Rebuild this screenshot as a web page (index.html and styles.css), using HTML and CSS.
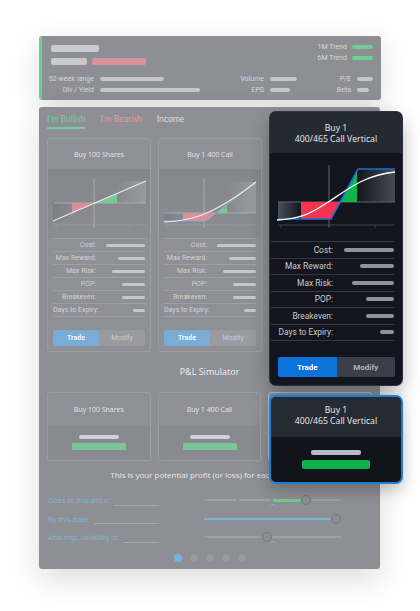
FILE: index.html
```html
<!DOCTYPE html>
<html lang="en">
<head>
  <meta charset="UTF-8">
  <meta name="viewport" content="width=device-width, initial-scale=1.0">
  <title>Strategy Builder</title>
  <link rel="stylesheet" href="styles.css">
</head>
<body>
  <div class="stage">
    <div class="quote">
      <div class="quote-top">
        <div class="name">
          <span class="ph ph-name"></span>
          <div class="name-row">
            <span class="ph ph-sym"></span>
            <span class="ph ph-chg"></span>
          </div>
        </div>
        <div class="trends">
          <div class="trend">1M Trend<i></i></div>
          <div class="trend">6M Trend<i></i></div>
        </div>
      </div>
      <div class="stats">
        <span class="k">52-week range</span><span class="v"><i style="width:64px"></i></span>
        <span class="k">Volume</span><span class="v"><i style="width:27px"></i></span>
        <span class="k">P/E</span><span class="v"><i style="width:16px"></i></span>
        <span class="k">Div / Yield</span><span class="v"><i style="width:100px"></i></span>
        <span class="k">EPS</span><span class="v"><i style="width:20px"></i></span>
        <span class="k">Beta</span><span class="v"><i style="width:12px"></i></span>
      </div>
    </div>

    <div class="panel">
      <nav class="tabs">
        <span class="tab bull active">I'm Bullish</span>
        <span class="tab bear">I'm Bearish</span>
        <span class="tab">Income</span>
      </nav>

      <div class="cards">
        <div class="card">
          <div class="card-head">Buy 100 Shares</div>
          <svg class="chart" viewBox="0 0 102 69">
            <defs>
              <linearGradient id="s1l" x1="0" x2="1"><stop offset="0" stop-color="#7c7d82"/><stop offset="1" stop-color="#7c7d82" stop-opacity="0"/></linearGradient>
              <linearGradient id="s1r" x1="1" x2="0"><stop offset="0" stop-color="#9a9b9f"/><stop offset="1" stop-color="#9a9b9f" stop-opacity="0"/></linearGradient>
            </defs>
            <rect x="5" y="34" width="19" height="18" fill="url(#s1l)"/>
            <rect x="69" y="12" width="29" height="22" fill="url(#s1r)"/>
            <path class="ax" d="M6 34H98M46 9V59"/>
            <path class="tk" d="M6 56H98M9 56v3M46 56v3M82 56v3"/>
            <polygon class="loss" points="24,34 46,34 24,43.8"/>
            <polygon class="gain" points="46,34 69,34 69,24.5"/>
            <path class="pl" d="M5 52L98 12"/>
          </svg>
          <div class="rows">
            <div class="row"><span class="k">Cost:</span><i style="width:39px"></i></div>
            <div class="row"><span class="k">Max Reward:</span><i style="width:27px"></i></div>
            <div class="row"><span class="k">Max Risk:</span><i style="width:33px"></i></div>
            <div class="row"><span class="k">POP:</span><i style="width:23px"></i></div>
            <div class="row"><span class="k">Breakeven:</span><i style="width:23px"></i></div>
            <div class="row"><span class="k">Days to Expiry:</span><i style="width:12px"></i></div>
          </div>
          <div class="btns"><span class="trade">Trade</span><span class="modify">Modify</span></div>
        </div>

        <div class="card">
          <div class="card-head">Buy 1 400 Call</div>
          <svg class="chart" viewBox="0 0 102 69">
            <defs>
              <linearGradient id="s2l" x1="0" x2="1"><stop offset="0" stop-color="#7c7d82"/><stop offset="1" stop-color="#7c7d82" stop-opacity="0"/></linearGradient>
              <linearGradient id="s2r" x1="1" x2="0"><stop offset="0" stop-color="#9a9b9f"/><stop offset="1" stop-color="#9a9b9f" stop-opacity="0"/></linearGradient>
            </defs>
            <rect x="5" y="44" width="19" height="8" fill="url(#s2l)"/>
            <rect x="68" y="13" width="29" height="31" fill="url(#s2r)"/>
            <path class="ax" d="M5 44H97M45 9V59"/>
            <path class="tk" d="M5 56H97M8 56v3M45 56v3M81 56v3"/>
            <polygon class="loss" points="24,44 57.3,44 47,52 24,52"/>
            <polygon class="gain" points="57.3,44 68,44 68,35.6"/>
            <polyline class="pay" points="5,52 47,52 97,13"/>
            <path class="pl" d="M5 53C30 52 52 48 97 13"/>
          </svg>
          <div class="rows">
            <div class="row"><span class="k">Cost:</span><i style="width:39px"></i></div>
            <div class="row"><span class="k">Max Reward:</span><i style="width:27px"></i></div>
            <div class="row"><span class="k">Max Risk:</span><i style="width:33px"></i></div>
            <div class="row"><span class="k">POP:</span><i style="width:23px"></i></div>
            <div class="row"><span class="k">Breakeven:</span><i style="width:23px"></i></div>
            <div class="row"><span class="k">Days to Expiry:</span><i style="width:12px"></i></div>
          </div>
          <div class="btns"><span class="trade">Trade</span><span class="modify">Modify</span></div>
        </div>

        <div class="card"></div>
      </div>

      <h2 class="sim-title">P&amp;L Simulator</h2>

      <div class="cards">
        <div class="scard">
          <div class="scard-head">Buy 100 Shares</div>
          <div class="scard-body"><span class="ph-val"></span><span class="ph-pl"></span></div>
        </div>
        <div class="scard">
          <div class="scard-head">Buy 1 400 Call</div>
          <div class="scard-body"><span class="ph-val"></span><span class="ph-pl"></span></div>
        </div>
        <div class="scard picked"></div>
      </div>

      <p class="sim-note">This is your potential profit (or loss) for each strategy:</p>

      <div class="sim-rows">
        <div class="sim-row">
          <div class="field">Goes to this price:<span class="line"></span></div>
          <div class="slider">
            <span class="seg" style="width:33px"></span>
            <span class="seg" style="width:32px;margin-left:2px"></span>
            <span class="seg up" style="width:28px;margin-left:2px"></span>
            <span class="knob"></span>
            <span class="seg fill"></span>
            <svg class="caret" viewBox="0 0 6 4"><path d="M0.8 3.4L3 1L5.2 3.4"/></svg>
          </div>
        </div>
        <div class="sim-row">
          <div class="field">By this date:<span class="line"></span></div>
          <div class="slider">
            <span class="seg blue fill"></span>
            <span class="knob"></span>
          </div>
        </div>
        <div class="sim-row">
          <div class="field">And imp. volatility is:<span class="line"></span></div>
          <div class="slider">
            <span class="seg" style="width:58px"></span>
            <span class="knob"></span>
            <span class="seg fill"></span>
            <svg class="caret" viewBox="0 0 6 4"><path d="M0.8 3.4L3 1L5.2 3.4"/></svg>
          </div>
        </div>
      </div>

      <div class="dots"><i class="on"></i><i></i><i></i><i></i><i></i></div>
    </div>

    <!-- highlighted strategy, lifted over the dimmed page -->
    <div class="focus">
      <div class="focus-head">Buy 1<br>400/465 Call Vertical</div>
      <svg class="focus-chart" viewBox="0 0 132 88">
        <defs>
          <linearGradient id="fl" x1="0" x2="1"><stop offset="0" stop-color="#4b4f58"/><stop offset="1" stop-color="#4b4f58" stop-opacity="0"/></linearGradient>
          <linearGradient id="fr" x1="1" x2="0"><stop offset="0" stop-color="#464a53"/><stop offset="1" stop-color="#464a53" stop-opacity="0"/></linearGradient>
        </defs>
        <rect x="8" y="49" width="23" height="17" fill="url(#fl)"/>
        <rect x="87" y="16" width="38" height="33" fill="url(#fr)"/>
        <path class="ax" d="M8 49H125M59 12V74"/>
        <path class="tk" d="M8 72H125M11 72v3M59 72v3M105 72v3"/>
        <polygon class="loss" points="31,49 70,49 61,66 31,66"/>
        <polygon class="gain" points="70,49 87,49 87,17.9"/>
        <polyline class="pay" points="8,66 61,66 88,16 125,16"/>
        <path class="pl" d="M7 67C35 66 45 57 60 48C78 36 95 22 125 19"/>
      </svg>
      <div class="rows">
        <div class="row"><span class="k">Cost:</span><i style="width:50px"></i></div>
        <div class="row"><span class="k">Max Reward:</span><i style="width:34px"></i></div>
        <div class="row"><span class="k">Max Risk:</span><i style="width:42px"></i></div>
        <div class="row"><span class="k">POP:</span><i style="width:28px"></i></div>
        <div class="row"><span class="k">Breakeven:</span><i style="width:28px"></i></div>
        <div class="row"><span class="k">Days to Expiry:</span><i style="width:14px"></i></div>
      </div>
      <div class="btns"><span class="trade">Trade</span><span class="modify">Modify</span></div>
    </div>

    <div class="focus-sim">
      <div class="focus-sim-head">Buy 1<br>400/465 Call Vertical</div>
      <div class="focus-sim-body"><span class="ph-val"></span><span class="ph-pl"></span></div>
    </div>
  </div>
</body>
</html>
```

FILE: styles.css
```css
* {
  box-sizing: border-box;
}

body {
  margin: 0;
  background: #fff;
  font-family: Roboto, "Liberation Sans", sans-serif;
  overflow: hidden;
}

.stage {
  position: relative;
  width: 420px;
  height: 611px;
  padding: 36px 0 0 39px;
}

/* quote header */
.quote {
  width: 342px;
  height: 64px;
  margin-bottom: 7px;
  padding: 9px 8px 0 9px;
  background: #8e8f94;
  border-left: 3px solid #6fcf90;
  border-radius: 3px;
  box-shadow: 0 8px 28px rgba(0, 0, 0, 0.13);
}

.quote-top {
  display: flex;
  justify-content: space-between;
  height: 21px;
}

.ph {
  display: block;
  height: 7px;
  border-radius: 2px;
  background: #c9cacd;
}

.ph-name { width: 48px; }
.ph-sym { width: 36px; }
.ph-chg { width: 54px; margin-left: 5px; background: #d8949b; }

.name-row {
  display: flex;
  margin-top: 6px;
}

.trends {
  margin-top: -3.5px;
}

.trend {
  display: flex;
  align-items: center;
  justify-content: flex-end;
  height: 11px;
  font-size: 7px;
  color: #d6d7da;
}

.trend i {
  width: 21px;
  height: 4px;
  margin-left: 5px;
  border-radius: 2px;
  background: #71cf92;
}

.stats {
  display: grid;
  grid-template-columns: 43px 125px 33px 60px 15px 16px;
  grid-auto-rows: 10.5px;
  column-gap: 6px;
  margin-top: 8px;
  font-size: 7px;
  color: #d6d7da;
}

.stats .k {
  display: flex;
  align-items: center;
  justify-content: flex-end;
  white-space: nowrap;
}

.stats .v {
  display: flex;
  align-items: center;
}

.stats .v i {
  height: 4px;
  border-radius: 2px;
  background: #c5c6ca;
}

/* dimmed main panel */
.panel {
  width: 341px;
  height: 462px;
  padding: 0 8px;
  background: #8e8f94;
  border-radius: 3px;
  box-shadow: 0 10px 30px rgba(0, 0, 0, 0.14);
}

.tabs {
  display: flex;
  align-items: flex-start;
  gap: 15px;
  height: 31px;
  padding-top: 7px;
  font-family: Lato, "Open Sans", sans-serif;
  font-size: 8.6px;
}

.tab {
  line-height: 11px;
  padding-bottom: 2px;
  border-bottom: 2px solid transparent;
  color: #d9dadc;
}

.tab.bull { color: #78cf99; }
.tab.bear { color: #e39ca5; }
.tab.active { border-bottom-color: #78cf99; }

.cards {
  display: flex;
  gap: 7px;
}

.card {
  width: 104px;
  height: 214px;
  border: 1px solid #9c9da2;
  border-radius: 3px;
  background: #8f9095;
}

.card-head,
.scard-head {
  display: flex;
  align-items: center;
  justify-content: center;
  height: 30px;
  font-family: "Open Sans", sans-serif;
  font-size: 7px;
  color: #e6e6e8;
}

.chart {
  display: block;
  width: 102px;
  height: 69px;
  background: linear-gradient(#85868b, #8b8c91);
}

.chart .ax { stroke: #b4b5b9; stroke-width: 0.8; fill: none; }
.chart .tk { stroke: #9fa0a4; stroke-width: 0.7; fill: none; }
.chart .loss { fill: #d98f98; }
.chart .gain { fill: #79c996; }
.chart .pay { stroke: #7aaed6; stroke-width: 1; fill: none; }
.chart .pl { stroke: #ececee; stroke-width: 1.1; fill: none; }

.rows {
  margin: 0 5px;
  border-top: 1px solid #9fa0a4;
}

.row {
  display: flex;
  align-items: center;
  height: 13px;
  border-bottom: 1px solid #9fa0a4;
  font-size: 7px;
  color: #d2d3d6;
}

.row .k {
  display: flex;
  justify-content: flex-end;
  flex: 0 0 43px;
  white-space: nowrap;
}

.row i {
  height: 3px;
  margin-left: auto;
  border-radius: 2px;
  background: #c6c7cb;
}

.btns {
  display: flex;
  height: 16px;
  margin: 13px 5px 0;
  border-radius: 2px;
  overflow: hidden;
  font-size: 7px;
}

.btns span {
  flex: 1;
  display: flex;
  align-items: center;
  justify-content: center;
}

.btns .trade { background: #79acd6; color: #eef4fa; font-weight: 700; }
.btns .modify { background: #9a9ba0; color: #c9cacd; }

.sim-title {
  margin: 14px 0 14px;
  line-height: 12px;
  text-align: center;
  font-family: "Open Sans", sans-serif;
  font-size: 9px;
  font-weight: 400;
  color: #eeeef0;
}

.scard {
  width: 104px;
  height: 69px;
  border: 1px solid #9c9da2;
  border-radius: 3px;
  background: #8f9095;
  overflow: hidden;
}

.scard-head { height: 32px; }

.scard-body {
  display: flex;
  flex-direction: column;
  align-items: center;
  height: 35px;
  padding-top: 10px;
  background: #898a8f;
}

.ph-val {
  width: 40px;
  height: 4px;
  border-radius: 2px;
  background: #d0d1d4;
}

.ph-pl {
  width: 54px;
  height: 7px;
  margin-top: 4px;
  border-radius: 1px;
  background: #7cc79a;
}

.scard.picked { border-color: #a9c2da; }

.sim-note {
  margin: 8px 0 10px;
  line-height: 12px;
  text-align: center;
  font-family: "Open Sans", sans-serif;
  font-size: 8px;
  color: #e6e6e8;
  white-space: nowrap;
}

.sim-row {
  display: flex;
  align-items: center;
  height: 18.5px;
  padding-left: 1px;
}

.field {
  display: flex;
  align-items: center;
  width: 111px;
  font-family: "Open Sans", sans-serif;
  font-size: 7.4px;
  color: #7fb5da;
  white-space: nowrap;
}

.field .line {
  flex: 1;
  height: 11px;
  margin-left: 4px;
  border-bottom: 1px solid #a6a7ab;
}

.slider {
  position: relative;
  display: flex;
  align-items: center;
  width: 137px;
  height: 10px;
  margin-left: 45px;
}

.seg {
  height: 2px;
  border-radius: 1px;
  background: #a0a1a5;
}

.seg.fill { flex: 1; }
.seg.up { background: #79c895; height: 2.5px; }
.seg.blue { background: #7ab4da; height: 2.5px; }

.knob {
  flex: 0 0 10px;
  height: 10px;
  border-radius: 50%;
  border: 1.2px solid #77787d;
  background: #8c8d92;
}

.caret {
  position: absolute;
  left: 66px;
  top: 8px;
  width: 6px;
  height: 4px;
  stroke: #7fb5da;
  stroke-width: 0.9;
  fill: none;
}

.dots {
  display: flex;
  justify-content: center;
  gap: 8px;
  margin-top: 7px;
}

.dots i {
  width: 8px;
  height: 8px;
  border-radius: 50%;
  background: #9a9ba0;
}

.dots i.on { background: #77b5dd; }

/* focused strategy cards */
.focus {
  position: absolute;
  left: 270px;
  top: 112px;
  width: 132px;
  height: 273px;
  background: #12151d;
  border-radius: 6px;
  overflow: hidden;
  box-shadow: 0 0 0 1px #2f333c, 0 8px 20px rgba(0, 0, 0, 0.3);
}

.focus-head {
  height: 41px;
  padding-top: 11px;
  background: #252932;
  text-align: center;
  font-family: "Open Sans", sans-serif;
  font-size: 8.7px;
  line-height: 11px;
  color: #eceef2;
}

.focus-chart {
  display: block;
  width: 132px;
  height: 88px;
}

.focus-chart .ax { stroke: #60646d; stroke-width: 1; fill: none; }
.focus-chart .tk { stroke: #4a4e57; stroke-width: 0.8; fill: none; }
.focus-chart .loss { fill: #f2344f; }
.focus-chart .gain { fill: #0eb64e; }
.focus-chart .pay { stroke: #1a6fd2; stroke-width: 1.6; fill: none; }
.focus-chart .pl { stroke: #ffffff; stroke-width: 1.3; fill: none; }

.focus .rows {
  margin: 0 8px 0 1px;
  border-top-color: #343843;
}

.focus .row {
  height: 16.5px;
  border-bottom-color: #343843;
  font-size: 8.4px;
  color: #c9ccd2;
}

.focus .row .k { flex-basis: 62px; }

.focus .row i {
  height: 4px;
  background: #8e929b;
}

.focus .btns {
  height: 20px;
  margin: 16px 7px 0 8px;
  font-size: 8px;
}

.focus .btns .trade { background: #0b73d9; color: #fff; }
.focus .btns .modify { background: #3b3f4a; color: #aeb2bb; font-weight: 700; }

.focus-sim {
  position: absolute;
  left: 269px;
  top: 395px;
  width: 134px;
  height: 89px;
  background: #11141b;
  border: 2px solid #1b7fd6;
  border-radius: 7px;
  overflow: hidden;
  box-shadow: 0 6px 16px rgba(0, 0, 0, 0.25);
}

.focus-sim-head {
  height: 40px;
  padding-top: 8px;
  background: #262a33;
  text-align: center;
  font-family: "Open Sans", sans-serif;
  font-size: 8.7px;
  line-height: 11px;
  color: #eceef2;
}

.focus-sim-body {
  display: flex;
  flex-direction: column;
  align-items: center;
  padding-top: 13px;
}

.focus-sim-body .ph-val {
  width: 50px;
  height: 5px;
  background: #b6bac2;
}

.focus-sim-body .ph-pl {
  width: 68px;
  height: 9px;
  margin-top: 5px;
  border-radius: 2px;
  background: #0db14b;
}
```
